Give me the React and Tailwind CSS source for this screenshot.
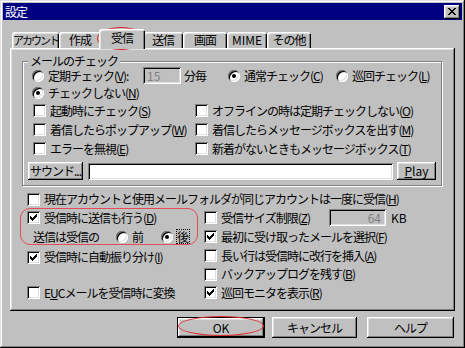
import React from "react";

const raised =
  "shadow-[inset_-1px_-1px_#000,inset_1px_1px_#fff,inset_-2px_-2px_#808080,inset_2px_2px_#dfdfdf]";
const sunken =
  "shadow-[inset_1px_1px_#808080,inset_-1px_-1px_#fff,inset_2px_2px_#000,inset_-2px_-2px_#dfdfdf]";

function U({ children }) {
  return <span className="underline underline-offset-[1px]">{children}</span>;
}

function Check({ checked }) {
  return (
    <span className={`relative block w-[13px] h-[13px] shrink-0 bg-white ${sunken}`}>
      {checked && (
        <svg className="absolute left-0 top-0" width="13" height="13" viewBox="0 0 13 13" shapeRendering="crispEdges">
          <rect x="9" y="3" width="1" height="1" fill="#000" />
          <rect x="8" y="4" width="2" height="1" fill="#000" />
          <rect x="3" y="5" width="1" height="1" fill="#000" />
          <rect x="7" y="5" width="3" height="1" fill="#000" />
          <rect x="3" y="6" width="2" height="1" fill="#000" />
          <rect x="6" y="6" width="3" height="1" fill="#000" />
          <rect x="3" y="7" width="5" height="1" fill="#000" />
          <rect x="4" y="8" width="3" height="1" fill="#000" />
          <rect x="5" y="9" width="1" height="1" fill="#000" />
        </svg>
      )}
    </span>
  );
}

function Radio({ checked }) {
  return (
    <span className={`flex w-[12px] h-[12px] shrink-0 items-center justify-center rounded-full bg-white ${sunken}`}>
      {checked && <span className="block w-[4px] h-[4px] rounded-full bg-black" />}
    </span>
  );
}

function CheckItem({ checked, children }) {
  return (
    <div className="flex items-center gap-[4px] whitespace-nowrap">
      <Check checked={checked} />
      <span>{children}</span>
    </div>
  );
}

function RadioItem({ checked, children, className = "" }) {
  return (
    <div className={`flex items-center gap-[4px] whitespace-nowrap ${className}`}>
      <Radio checked={checked} />
      <span>{children}</span>
    </div>
  );
}

function Tab({ label, w, selected }) {
  if (selected) {
    return (
      <div
        className={`relative z-10 -mx-[2px] -mb-[1px] flex h-[20px] ${w} items-center justify-center whitespace-nowrap rounded-t-[3px] bg-[#c0c0c0] pb-[2px] shadow-[inset_1px_1px_#fff,inset_2px_2px_#dfdfdf,inset_-1px_0_#000,inset_-2px_0_#808080]`}
      >
        {label}
      </div>
    );
  }
  return (
    <div
      className={`flex h-[16px] ${w} items-center justify-center whitespace-nowrap rounded-t-[3px] bg-[#c0c0c0] shadow-[inset_1px_1px_#fff,inset_2px_2px_#dfdfdf,inset_-1px_0_#000,inset_-2px_0_#808080]`}
    >
      {label}
    </div>
  );
}

export default function App() {
  return (
    <div className="relative flex h-[348px] w-[465px] flex-col bg-[#c0c0c0] p-[3px] text-[12px] leading-[14px] tracking-[-1px] text-black font-['Noto_Sans_CJK_JP',sans-serif] shadow-[inset_-1px_-1px_#000,inset_1px_1px_#dfdfdf,inset_-2px_-2px_#808080,inset_2px_2px_#fff]">
      {/* title bar */}
      <div className="flex h-[17px] shrink-0 items-center justify-between bg-[#000080] pl-[2px] pr-[2px]">
        <span className="text-white">設定</span>
        <div className={`relative h-[14px] w-[16px] bg-[#c0c0c0] ${raised}`}>
          <svg className="absolute left-[4px] top-[3px]" width="8" height="7" viewBox="0 0 8 7" shapeRendering="crispEdges">
            <rect x="0" y="0" width="2" height="1" fill="#000" />
            <rect x="6" y="0" width="2" height="1" fill="#000" />
            <rect x="1" y="1" width="2" height="1" fill="#000" />
            <rect x="5" y="1" width="2" height="1" fill="#000" />
            <rect x="2" y="2" width="4" height="1" fill="#000" />
            <rect x="3" y="3" width="2" height="1" fill="#000" />
            <rect x="2" y="4" width="4" height="1" fill="#000" />
            <rect x="1" y="5" width="2" height="1" fill="#000" />
            <rect x="5" y="5" width="2" height="1" fill="#000" />
            <rect x="0" y="6" width="2" height="1" fill="#000" />
            <rect x="6" y="6" width="2" height="1" fill="#000" />
          </svg>
        </div>
      </div>

      {/* tabs */}
      <div className="mt-[9px] flex h-[19px] shrink-0 items-end pl-[9px]">
        <Tab label={<span className="text-[11px] tracking-[-2px]">アカウント</span>} w="w-[47px]" />
        <Tab label="作成" w="w-[42px]" />
        <Tab label="受信" w="w-[46px]" selected />
        <Tab label="送信" w="w-[40px]" />
        <Tab label="画面" w="w-[44px]" />
        <Tab label={<span className="tracking-normal">MIME</span>} w="w-[40px]" />
        <Tab label="その他" w="w-[44px]" />
      </div>

      {/* panel */}
      <div className={`ml-[7px] flex h-[263px] w-[445px] shrink-0 flex-col pl-[12px] pt-[13px] ${raised}`}>
        {/* group box */}
        <div className="relative flex h-[125px] w-[420px] shrink-0 flex-col border border-[#808080] pt-[5px] shadow-[inset_1px_1px_#fff,1px_1px_#fff]">
          <span className="absolute -top-[7px] left-[5px] bg-[#c0c0c0] px-[2px] leading-[12px]">メールのチェック</span>

          <div className="flex h-[17px] items-center pl-[9px]">
            <RadioItem className="w-[111px]">
              定期チェック(<U>V</U>):
            </RadioItem>
            <div className={`flex h-[17px] w-[38px] items-center bg-[#c0c0c0] pl-[4px] text-[#808080] tracking-normal ${sunken}`}>
              15
            </div>
            <span className="ml-[3px] w-[44px]">分毎</span>
            <RadioItem checked className="w-[108px]">
              通常チェック(<U>C</U>)
            </RadioItem>
            <RadioItem>
              巡回チェック(<U>L</U>)
            </RadioItem>
          </div>

          <div className="flex h-[17px] items-center pl-[9px]">
            <RadioItem checked>
              チェックしない(<U>N</U>)
            </RadioItem>
          </div>

          <div className="grid grid-cols-[162px_1fr] grid-rows-[19px_19px_19px] items-center pl-[10px]">
            <CheckItem>
              起動時にチェック(<U>S</U>)
            </CheckItem>
            <CheckItem>
              オフラインの時は定期チェックしない(<U>O</U>)
            </CheckItem>
            <CheckItem>
              着信したらポップアップ(<U>W</U>)
            </CheckItem>
            <CheckItem>
              着信したらメッセージボックスを出す(<U>M</U>)
            </CheckItem>
            <CheckItem>
              エラーを無視(<U>E</U>)
            </CheckItem>
            <CheckItem>
              新着がないときもメッセージボックス(<U>T</U>)
            </CheckItem>
          </div>

          <div className="mt-[4px] flex h-[18px] items-center pl-[5px]">
            <div className={`flex h-[18px] w-[55px] items-center justify-center whitespace-nowrap ${raised}`}>サウンド...</div>
            <div className={`ml-[5px] h-[17px] w-[305px] bg-white ${sunken}`} />
            <div className={`ml-[4px] flex h-[18px] w-[39px] items-center justify-center tracking-normal ${raised}`}>
              <U>P</U>lay
            </div>
          </div>
        </div>

        {/* lower options */}
        <div className="ml-[5px] mt-[4px] flex h-[18px] items-center">
          <CheckItem>
            現在アカウントと使用メールフォルダが同じアカウントは一度に受信(<U>H</U>)
          </CheckItem>
        </div>

        <div className="ml-[5px] flex">
          <div className="flex w-[177px] shrink-0 flex-col">
            <div className="flex h-[19px] items-center">
              <CheckItem checked>
                受信時に送信も行う(<U>D</U>)
              </CheckItem>
            </div>
            <div className="flex h-[19px] items-center pl-[6px]">
              <span className="w-[83px] whitespace-nowrap">送信は受信の</span>
              <RadioItem className="w-[45px]">前</RadioItem>
              <div className="flex items-center gap-[3px]">
                <Radio checked />
                <span className="border border-dotted border-black leading-[13px] tracking-normal">後</span>
              </div>
            </div>
            <div className="flex h-[20px] items-center pt-[2px]">
              <CheckItem checked>
                受信時に自動振り分け(<U>I</U>)
              </CheckItem>
            </div>
            <div className="h-[17px]" />
            <div className="flex h-[19px] items-center">
              <CheckItem>
                E<U>U</U>Cメールを受信時に変換
              </CheckItem>
            </div>
          </div>

          <div className="flex flex-col">
            <div className="flex h-[19px] items-center">
              <div className="w-[125px]">
                <CheckItem>
                  受信サイズ制限(<U>Z</U>)
                </CheckItem>
              </div>
              <div className={`flex h-[17px] w-[57px] items-center justify-end bg-[#c0c0c0] pr-[5px] text-[#808080] tracking-normal ${sunken}`}>
                64
              </div>
              <span className="ml-[5px] tracking-normal">KB</span>
            </div>
            <div className="flex h-[19px] items-center">
              <CheckItem checked>
                最初に受け取ったメールを選択(<U>F</U>)
              </CheckItem>
            </div>
            <div className="flex h-[19px] items-center">
              <CheckItem>
                長い行は受信時に改行を挿入(<U>A</U>)
              </CheckItem>
            </div>
            <div className="flex h-[18px] items-center">
              <CheckItem>
                バックアップログを残す(<U>B</U>)
              </CheckItem>
            </div>
            <div className="flex h-[19px] items-center">
              <CheckItem checked>
                巡回モニタを表示(<U>R</U>)
              </CheckItem>
            </div>
          </div>
        </div>
      </div>

      {/* dialog buttons */}
      <div className="mt-[6px] flex h-[21px] shrink-0">
        <div className={`ml-[174px] flex h-[21px] w-[88px] items-center justify-center border border-black tracking-normal ${raised}`}>
          OK
        </div>
        <div className={`ml-[7px] flex h-[21px] w-[85px] items-center justify-center ${raised}`}>キャンセル</div>
        <div className={`ml-[10px] flex h-[21px] w-[87px] items-center justify-center ${raised}`}>ヘルプ</div>
      </div>

      {/* red annotations */}
      <div className="pointer-events-none absolute left-[97px] top-[27px] h-[23px] w-[48px] rounded-[50%] border-[1.5px] border-[#e02828]" />
      <div className="pointer-events-none absolute left-[20px] top-[208px] h-[37px] w-[178px] rounded-[10px] border-[1.5px] border-[#e44a58]" />
      <div className="pointer-events-none absolute left-[178px] top-[316px] h-[20px] w-[86px] rounded-[50%] border-[1.5px] border-[#e02828]" />
    </div>
  );
}
